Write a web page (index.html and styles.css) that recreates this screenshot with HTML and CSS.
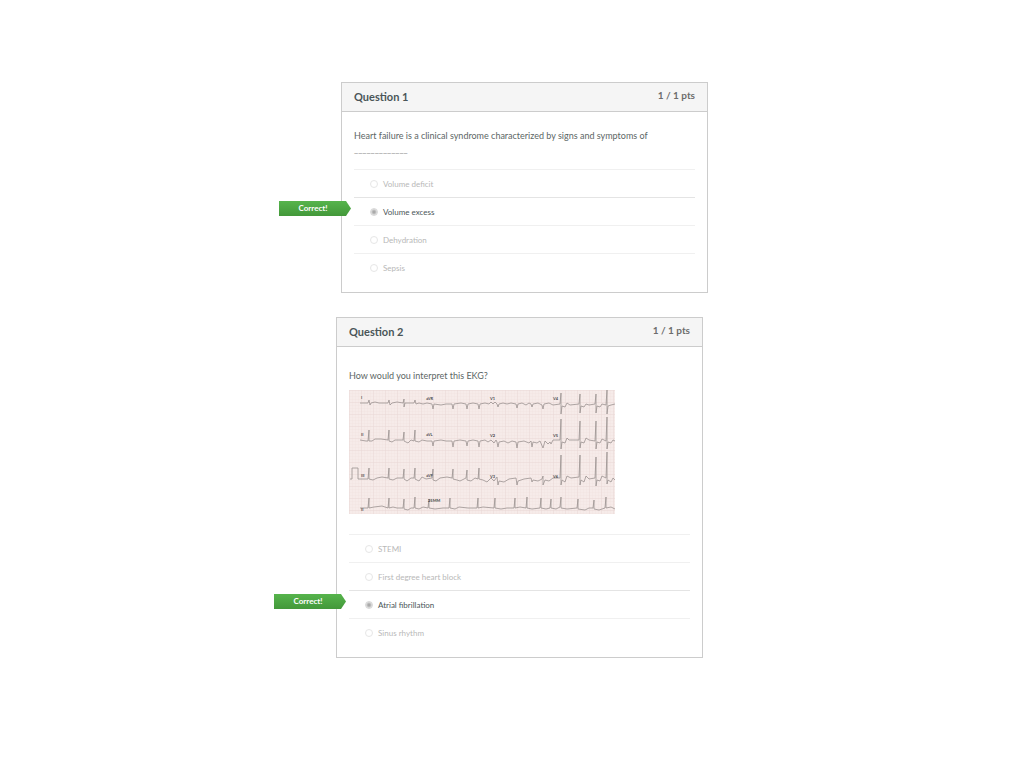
FILE: index.html
```html
<!DOCTYPE html>
<html lang="en">
<head>
    <meta charset="UTF-8">
    <meta name="viewport" content="width=device-width, initial-scale=1.0">
    <title>Quiz Results</title>
    <link rel="stylesheet" href="styles.css">
</head>
<body>
    <main class="quiz">
        <section class="question first">
            <div class="header">
                <h2>Question 1</h2>
                <span class="points">1 / 1 pts</span>
            </div>
            <div class="text">
                <p>Heart failure is a clinical syndrome characterized by signs and symptoms of <span class="blank">_____________</span></p>
            </div>
            <div class="answers">
                <div class="answer">
                    <input type="radio" name="q1" id="q1a" disabled>
                    <label for="q1a">Volume deficit</label>
                </div>
                <div class="answer selected">
                    <span class="correct">Correct!</span>
                    <input type="radio" name="q1" id="q1b" checked disabled>
                    <label for="q1b">Volume excess</label>
                </div>
                <div class="answer">
                    <input type="radio" name="q1" id="q1c" disabled>
                    <label for="q1c">Dehydration</label>
                </div>
                <div class="answer">
                    <input type="radio" name="q1" id="q1d" disabled>
                    <label for="q1d">Sepsis</label>
                </div>
            </div>
        </section>

        <section class="question second">
            <div class="header">
                <h2>Question 2</h2>
                <span class="points">1 / 1 pts</span>
            </div>
            <div class="text with-image">
                <p>How would you interpret this EKG?</p>
                <svg class="ekg" viewBox="0 0 266 124" role="img" aria-label="12-lead EKG">
                    <defs>
                        <pattern id="small" width="3" height="3" patternUnits="userSpaceOnUse">
                            <path d="M3 0H0V3" class="grid-small"/>
                        </pattern>
                        <pattern id="big" width="12" height="12" patternUnits="userSpaceOnUse">
                            <path d="M12 0H0V12" class="grid-big"/>
                        </pattern>
                    </defs>
                    <rect width="266" height="124" class="paper"/>
                    <rect width="266" height="124" fill="url(#small)"/>
                    <rect width="266" height="124" fill="url(#big)"/>
                    <!-- I, aVR, V1, V4 -->
                    <path class="trace" d="M11 13H19L20 10L21 15L22 13L26 12L30 13H39L40 10L41 15L43 13L48 12L54 13L55 9V17L56 13H65L66 10L67 14L70 13L74 14L78 13L83 14L84 19L85 14L92 15L97 14H103L104 19L105 14L112 13L117 14L118 19L119 14L124 13L129 14L130 19L131 14L136 13L140 14L142 12L144 14L146 12L148 14L149 17L150 14L154 13L158 14L162 13L167 14L168 18L169 14L173 13L177 15L180 13L182 14L183 17L184 14L189 13L193 15L194 19L195 14L200 13L204 15L211 14L212 3V24L213 16L216 17L218 13L221 15L230 14L231 4V23L232 16L235 17L237 14L240 15L246 14L247 4V23L248 16L251 17L253 14L257 15L258 0V24L259 16L262 15L266 14"/>
                    <!-- II, aVL, V2, V5 -->
                    <path class="trace" d="M11 50L17 51H19L20 40V51L23 51L26 49H32L39 50L40 40V51L43 52L46 50H54L55 42V51L59 53L62 50L65 51L66 40V51L70 52L73 50L78 51H83L84 56L85 51L92 50L97 51H103L104 57L105 51L111 50L117 51L118 56L119 51L124 50L129 51L130 57L131 51L136 50L139 52L142 50L145 53L147 50L148 52L149 57L150 52L155 51L159 53L163 51L167 52L168 58L169 52L175 51L180 53L182 51L183 57L184 52L188 53L191 51L194 58L196 51L199 54L201 52L202 54L204 50H211L212 29V59L213 52L216 53L218 48L220 50H230L231 31V58L232 52L235 53L237 48L240 50L246 51L247 31V59L248 52L251 53L253 49L257 51L258 27V59L259 52L262 53L264 50L266 51"/>
                    <!-- III, aVF, V3, V6 -->
                    <path class="trace" d="M1 89H3V78H9V89H19L20 78V89L24 90L28 88L33 87L39 88L40 78V89L44 90L48 88H54L55 79V89L58 91L62 88H65L66 78V89L70 91L73 87L77 89L83 88L84 79V90L87 91L91 88L98 87L103 88L104 79V89L108 90L111 91L117 88L118 80V90L122 91L126 88L129 89L130 78V89L134 90L138 92L142 88L145 91L148 87L149 95L150 91L155 92L160 89L167 88L168 95L169 91L175 89L182 88L183 92L184 90L189 91L193 89L194 86V95L196 90L200 91L204 88H211L212 65V95L213 90L216 92L218 86L222 88L230 87L231 65V95L232 90L235 92L237 86L240 89L246 88L247 67V96L248 90L251 91L253 86L257 88L258 62V94L259 90L262 92L264 88L266 90"/>
                    <!-- rhythm strip -->
                    <path class="trace" d="M11 118H19L20 108V118L25 117L33 116L39 118L40 108V118L44 117L48 118H54L55 109V119L59 120L62 118H65L66 107V118L70 119L74 117L79 118L80 109V118L86 119L94 118H100L101 108V118L106 119L110 117L119 118H128L129 108V118L134 117L145 118L146 108V118L152 119L158 118H165L166 108V118L171 117L177 118L178 107V118L183 119L191 118L192 108V118L197 119L201 118L202 109V118L207 119L211 117L212 107V118L218 119L228 118L229 109V119L236 120L240 118H244L245 110V119L250 120L256 118L257 107V118L262 117L266 119"/>
                    <g class="leads">
                        <text x="12" y="9">I</text>
                        <text x="77" y="10">aVR</text>
                        <text x="141" y="10">V1</text>
                        <text x="204" y="10">V4</text>
                        <text x="12" y="46">II</text>
                        <text x="77" y="46">aVL</text>
                        <text x="141" y="47">V2</text>
                        <text x="204" y="47">V5</text>
                        <text x="12" y="87">III</text>
                        <text x="77" y="87">aVF</text>
                        <text x="141" y="88">V3</text>
                        <text x="204" y="88">V6</text>
                        <text x="79" y="112">25MM</text>
                        <text x="12" y="121">II</text>
                    </g>
                </svg>
            </div>
            <div class="answers">
                <div class="answer">
                    <input type="radio" name="q2" id="q2a" disabled>
                    <label for="q2a">STEMI</label>
                </div>
                <div class="answer">
                    <input type="radio" name="q2" id="q2b" disabled>
                    <label for="q2b">First degree heart block</label>
                </div>
                <div class="answer selected">
                    <span class="correct">Correct!</span>
                    <input type="radio" name="q2" id="q2c" checked disabled>
                    <label for="q2c">Atrial fibrillation</label>
                </div>
                <div class="answer">
                    <input type="radio" name="q2" id="q2d" disabled>
                    <label for="q2d">Sinus rhythm</label>
                </div>
            </div>
        </section>
    </main>
</body>
</html>
```
FILE: styles.css
```css
* {
    box-sizing: border-box;
}
body {
    margin: 0;
    padding: 82px 0 40px 20px;
    background: white;
    color: #5c6665;
    font-family: Lato, sans-serif;
    font-size: 9px;
}
.quiz {
    display: flex;
    flex-direction: column;
    gap: 24px;
    max-width: 372px;
    margin: 0 auto;
}
.question {
    width: calc(100% - 5px);
    border: 1px solid #ccc;
}
.first {
    align-self: flex-end;
}
.header {
    display: flex;
    justify-content: space-between;
    padding: 0 12px;
    background: #f5f5f5;
    border-bottom: 1px solid #ccc;
    line-height: 28px;
}
.header h2 {
    margin: 0;
    font-size: 11px;
    font-weight: bold;
    color: #4a5558;
}
.points {
    font-size: 10px;
    font-weight: bold;
    color: #6c6c6c;
    line-height: 25px;
}
.text {
    padding: 15px 12px 16px;
}
.text p {
    margin: 0;
    line-height: 18px;
}
.blank {
    display: block;
    line-height: 8px;
    color: #999;
}
.with-image {
    padding: 20px 12px;
}
.ekg {
    display: block;
    width: 266px;
    max-width: 100%;
    margin-top: 5px;
}
.answers {
    padding: 0 12px 11px;
}
.answer {
    position: relative;
    display: flex;
    align-items: center;
    gap: 5px;
    height: 28px;
    padding-left: 16px;
    border-top: 1px solid #f0f0f0;
    font-size: 8px;
    color: #b8b8b8;
}
.selected {
    border-top-color: #e4e4e4;
    color: #4a5558;
}
.answer input {
    appearance: none;
    width: 8px;
    height: 8px;
    margin: 0;
    border: 1px solid #e6e6e6;
    border-radius: 50%;
}
.answer input:checked {
    border-color: #d8d8d8;
    background: radial-gradient(circle, #aaa 0 1px, #e2e2e2 3px);
}
.correct {
    position: absolute;
    left: -75px;
    top: 3px;
    width: 72px;
    padding-right: 4px;
    background: linear-gradient(#56b44c, #43983a);
    clip-path: polygon(0 0, 67px 0, 100% 50%, 67px 100%, 0 100%);
    color: white;
    font-weight: bold;
    line-height: 15px;
    text-align: center;
}

/* ekg strip */
.paper {
    fill: #f6ebe9;
}
.grid-small {
    fill: none;
    stroke: #f0dfdd;
    stroke-width: 0.5;
}
.grid-big {
    fill: none;
    stroke: #e3d0ce;
    stroke-width: 0.6;
}
.trace {
    fill: none;
    stroke: #9a9291;
    stroke-width: 0.8;
    stroke-linejoin: round;
}
.leads {
    fill: #444;
    font-size: 4px;
    font-weight: bold;
}
```
